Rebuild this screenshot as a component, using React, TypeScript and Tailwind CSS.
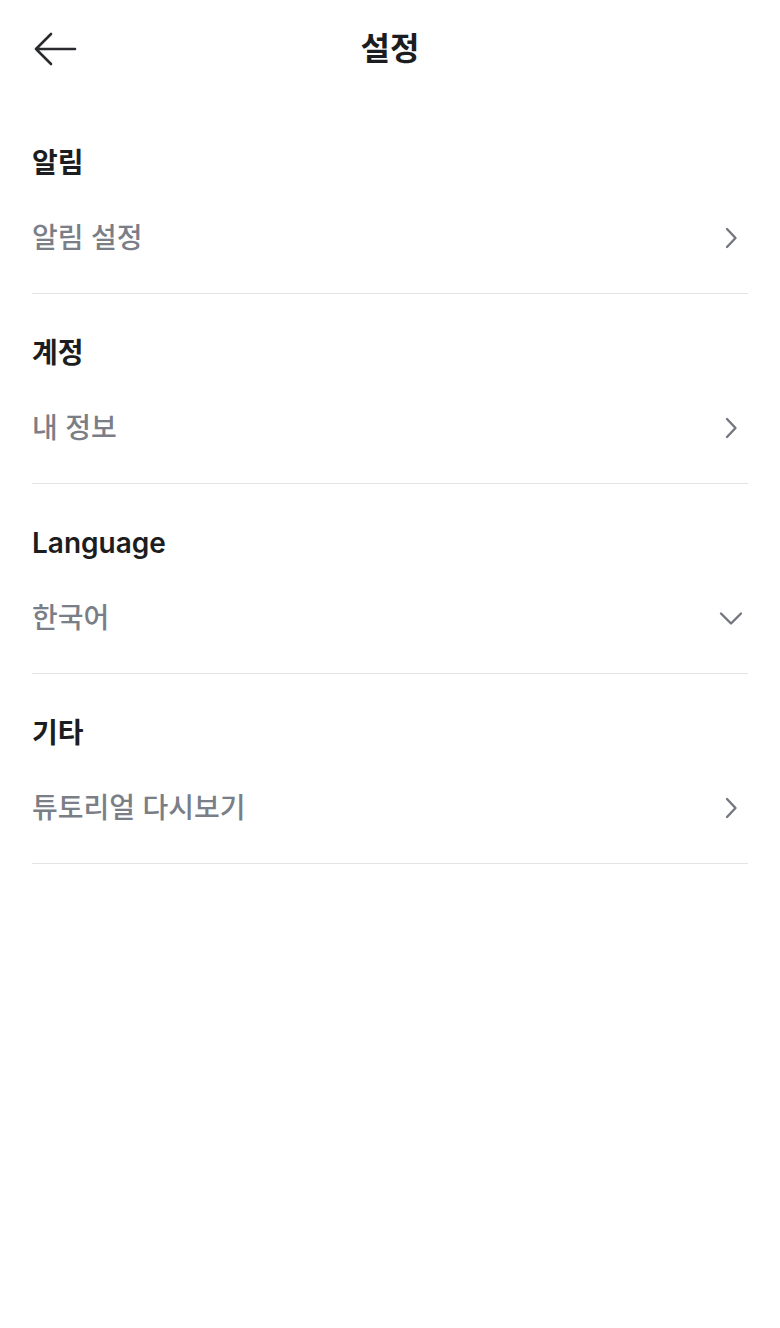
const font = { fontFamily: 'Inter, "Noto Sans CJK KR", sans-serif' };

function ChevronRight() {
  return (
    <svg width="14" height="22" viewBox="0 0 14 22" fill="none" className="text-[#74777f]">
      <path d="M3 2l8.5 9L3 20" stroke="currentColor" strokeWidth="2.4" strokeLinecap="round" strokeLinejoin="round" />
    </svg>
  );
}

function ChevronDown() {
  return (
    <svg width="24" height="16" viewBox="0 0 24 16" fill="none" className="text-[#74777f]">
      <path d="M2 3.5l10 10 10-10" stroke="currentColor" strokeWidth="2.4" strokeLinecap="round" strokeLinejoin="round" />
    </svg>
  );
}

interface SectionProps {
  title: string;
  item: string;
  dropdown?: boolean;
}

function Section({ title, item, dropdown }: SectionProps) {
  return (
    <section className="pt-[40px] border-b border-[#e3e4e6]">
      <h2 className="h-[36px] leading-[38px] text-[28px] font-semibold text-[#1c1d20]">{title}</h2>
      <button
        type="button"
        className="w-full mt-[40px] mb-[37px] h-[36px] flex items-center justify-between"
      >
        <span className="text-[28px] leading-[38px] font-medium text-[#7a7e87]">{item}</span>
        <span className="flex items-center justify-center w-[24px] mr-[5px]">
          {dropdown ? <ChevronDown /> : <ChevronRight />}
        </span>
      </button>
    </section>
  );
}

export default function App() {
  return (
    <div className="min-h-screen bg-white" style={font}>
      <header className="relative h-[98px] flex items-center justify-center">
        <button type="button" className="absolute left-[32px] top-1/2 -translate-y-1/2">
          <svg width="46" height="34" viewBox="0 0 46 34" fill="none" className="text-[#2a2b2e]">
            <path d="M43 17H4M19 2L4 17l15 15" stroke="currentColor" strokeWidth="2.6" strokeLinecap="round" strokeLinejoin="round" />
          </svg>
        </button>
        <h1 className="text-[32px] font-semibold text-[#1c1d20]">설정</h1>
      </header>
      <main className="px-[32px] pt-[6px]">
        <Section title="알림" item="알림 설정" />
        <Section title="계정" item="내 정보" />
        <Section title="Language" item="한국어" dropdown />
        <Section title="기타" item="튜토리얼 다시보기" />
      </main>
    </div>
  );
}
